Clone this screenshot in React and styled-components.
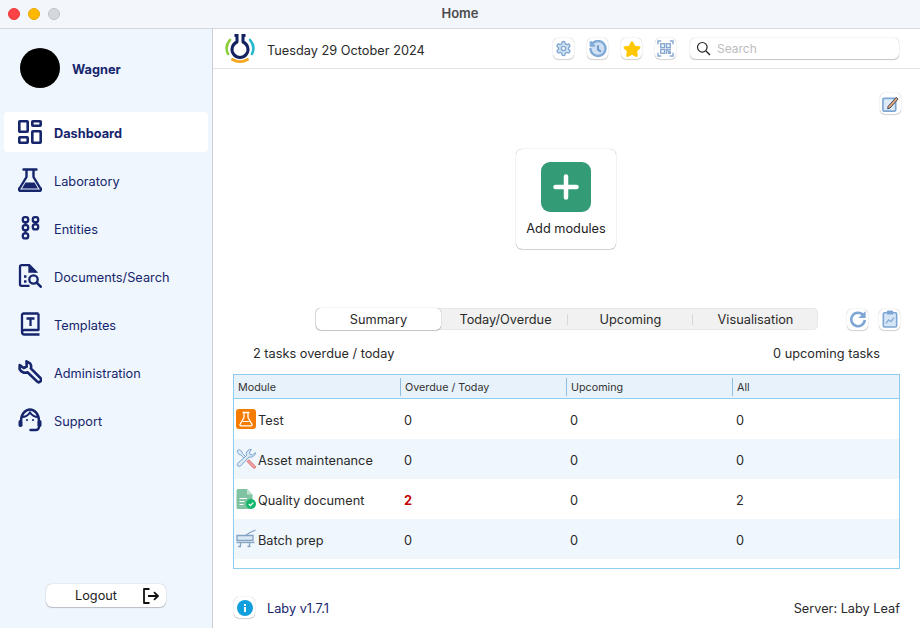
import React from "react";
import styled, { createGlobalStyle } from "styled-components";

const NAVY = "#16256c";

const GlobalStyle = createGlobalStyle`
  html, body {
    margin: 0;
    padding: 0;
    background: #fff;
  }
  body {
    font-family: Inter, "Liberation Sans", sans-serif;
    font-size: 12.75px;
    color: #222;
  }
  * { box-sizing: border-box; }
`;

const Icon = styled.svg`
  display: block;
  flex: none;
`;

const DashboardIcon = () => (
  <Icon width="24" height="24" viewBox="0 0 24 24" fill="none" stroke={NAVY} strokeWidth="2.6">
    <rect x="1.300" y="1.300" width="8.400" height="10.400" rx="0.600" />
    <rect x="14.300" y="1.300" width="8.400" height="4.400" rx="0.600" />
    <rect x="1.300" y="17.300" width="8.400" height="5.400" rx="0.600" />
    <rect x="14.300" y="11.300" width="8.400" height="11.400" rx="0.600" />
  </Icon>
);

const FlaskIcon = () => (
  <Icon width="24" height="24" viewBox="0 0 24 24" fill="none" stroke={NAVY} strokeWidth="2.400">
    <path d="M5.500 1.500h13M8.500 1.500v7.500L1.800 20a1.500 1.500 0 0 0 1.300 2.700h17.800a1.500 1.500 0 0 0 1.300-2.700L15.500 9V1.500" strokeLinejoin="round" strokeLinecap="round" />
    <path d="M7.500 14.500h9l3.500 6H4z" fill={NAVY} stroke="none" />
  </Icon>
);

const EntitiesIcon = () => (
  <Icon width="24" height="24" viewBox="0 0 24 24" fill="none" stroke={NAVY} strokeWidth="2.300">
    <rect x="4.800" y="1.200" width="5.400" height="5" rx="2.200" />
    <rect x="14.800" y="1.200" width="5.400" height="5" rx="2.200" />
    <rect x="4.800" y="9.200" width="5.400" height="5" rx="2.200" />
    <rect x="14.800" y="8.400" width="5.400" height="5" rx="2.200" />
    <rect x="4.800" y="17.400" width="5.400" height="5" rx="2.200" />
    <path d="M7.500 6.200v3M7.500 14.200v3.200M17.500 6.200v2.200" />
  </Icon>
);

const DocSearchIcon = () => (
  <Icon width="24" height="24" viewBox="0 0 24 24" fill="none" stroke={NAVY} strokeWidth="2.300">
    <path d="M11.500 21.800H3.500a1.500 1.500 0 0 1-1.500-1.500V2.700a1.500 1.500 0 0 1 1.500-1.500H11l6 6v1.300" strokeLinejoin="round" />
    <path d="M11.500 1.500v6h6z" fill={NAVY} />
    <path d="M6 12.500h2.500M6 17.500h2.500" />
    <circle cx="15.500" cy="15.500" r="4.200" />
    <path d="M18.700 18.700l4 4" strokeLinecap="round" strokeWidth="2.600" />
  </Icon>
);

const TemplateIcon = () => (
  <Icon width="24" height="24" viewBox="0 0 24 24" fill="none" stroke={NAVY} strokeWidth="2.300">
    <path d="M20.500 1.500H5.500A1.500 1.500 0 0 0 4 3v17A2.500 2.500 0 0 0 6.500 22.500H21.500M20.500 1.500v16.500H6.500A2.500 2.500 0 0 0 4 20" strokeLinejoin="round" />
    <path d="M8.500 6.500h8M12.500 6.500v7.500" />
  </Icon>
);

const WrenchIcon = () => (
  <Icon width="24" height="24" viewBox="0 0 24 24" fill="none" stroke={NAVY} strokeWidth="2.600">
    <path d="M8.500 1.400L12 3.400a5 5 0 0 1 .8 5L22.400 18a2.400 2.400 0 0 1-3.400 3.400L9.500 12.300a6 6 0 0 1-7.900-3.300L1.700 5l4 3 3-1.500z" strokeLinejoin="round" />
  </Icon>
);

const SupportIcon = () => (
  <Icon width="24" height="24" viewBox="0 0 24 24" fill="none" stroke={NAVY} strokeWidth="2.400">
    <path d="M3 13C3 6 7.500 1.500 12 1.500S21 6 21 13v6a3 3 0 0 1-3 3h-5.500" strokeLinecap="round" />
    <path d="M4 9c2.500 0 6-1.500 8-4.500 2 3 5.500 4.500 8 4.500" strokeWidth="2" />
    <rect x="0.500" y="12" width="4" height="7" rx="1.800" fill={NAVY} stroke="none" />
    <rect x="19.500" y="12" width="4" height="7" rx="1.800" fill={NAVY} stroke="none" />
    <circle cx="9" cy="12" r="1.100" fill={NAVY} stroke="none" />
    <circle cx="15" cy="12" r="1.100" fill={NAVY} stroke="none" />
  </Icon>
);

const LogoutIcon = () => (
  <Icon width="16" height="16" viewBox="0 0 16 16" fill="none" stroke="#111" strokeWidth="1.800">
    <path d="M6.500 1H1v14h5.500" strokeLinejoin="round" />
    <path d="M5 8h10M11 4.200L15 8l-4 3.800" />
  </Icon>
);

const LogoIcon = () => (
  <Icon width="30" height="30" viewBox="0 0 30 30" fill="none">
    <path d="M3 20A12.800 12.800 0 0 1 5 6" stroke="#8ccf3a" strokeWidth="2.600" strokeLinecap="round" />
    <path d="M27 20A12.800 12.800 0 0 0 25 6" stroke="#25b9d0" strokeWidth="2.600" strokeLinecap="round" />
    <path d="M7.500 25.500c4.500 2.800 10.500 2.800 15 0" stroke="#f5a623" strokeWidth="3" strokeLinecap="round" />
    <path d="M9.500 1.500h4M16.500 1.500h4M12 1.500v6.500a8 8 0 1 0 6 0V1.500" stroke="#14225f" strokeWidth="3" strokeLinejoin="round" />
  </Icon>
);

const GearIcon = () => (
  <Icon width="17" height="17" viewBox="0 0 24 24" fill="#d3e4f5" stroke="#80a8d2" strokeWidth="2">
    <path d="M12.220 2h-.44a2 2 0 0 0-2 2v.18a2 2 0 0 1-1 1.730l-.43.250a2 2 0 0 1-2 0l-.15-.08a2 2 0 0 0-2.730.730l-.22.380a2 2 0 0 0 .730 2.730l.15.100a2 2 0 0 1 1 1.720v.510a2 2 0 0 1-1 1.740l-.15.090a2 2 0 0 0-.730 2.730l.22.380a2 2 0 0 0 2.730.730l.15-.08a2 2 0 0 1 2 0l.43.250a2 2 0 0 1 1 1.730V20a2 2 0 0 0 2 2h.44a2 2 0 0 0 2-2v-.18a2 2 0 0 1 1-1.730l.43-.250a2 2 0 0 1 2 0l.15.08a2 2 0 0 0 2.730-.730l.22-.390a2 2 0 0 0-.730-2.730l-.15-.08a2 2 0 0 1-1-1.740v-.500a2 2 0 0 1 1-1.740l.15-.090a2 2 0 0 0 .730-2.730l-.22-.380a2 2 0 0 0-2.730-.730l-.15.080a2 2 0 0 1-2 0l-.43-.250a2 2 0 0 1-1-1.730V4a2 2 0 0 0-2-2z" />
    <circle cx="12" cy="12" r="3" fill="#fff" />
  </Icon>
);

const HistoryIcon = () => (
  <Icon width="18" height="18" viewBox="0 0 24 24" fill="#cfe0f2" stroke="#82aad6" strokeWidth="3.200">
    <path d="M3.500 6A10 10 0 1 1 2 12" strokeLinecap="round" />
    <path d="M2.500 1.500v6H8" fill="none" />
    <path d="M12 7v6l4 2.500" fill="none" stroke="#6f9ace" strokeWidth="2.800" />
  </Icon>
);

const StarIcon = () => (
  <Icon width="18" height="18" viewBox="0 0 24 24" fill="#ffc800" stroke="#ffc800" strokeWidth="3.500" strokeLinejoin="round">
    <path d="M12 3.500l3 5.800 6.500.9-4.700 4.600 1.200 6-6-3-6 3 1.200-6L2.500 10.200 9 9.300z" />
  </Icon>
);

const QrIcon = () => (
  <Icon width="17" height="17" viewBox="0 0 18 18" fill="none" stroke="#86a8d0" strokeWidth="1.500">
    <path d="M1 4.500V1h3.500M13.500 1H17v3.500M1 13.500V17h3.500M13.500 17H17v-3.500" />
    <rect x="4" y="4" width="4" height="4" />
    <rect x="10" y="4" width="4" height="4" />
    <rect x="4" y="10" width="4" height="4" />
    <path d="M10 10h1.500v1.500H10zM12.500 12.500H14V14h-1.500zM12.500 10H14v1M10 12.500V14h1" />
  </Icon>
);

const SearchGlyph = () => (
  <Icon width="15" height="15" viewBox="0 0 15 15" fill="none" stroke="#222" strokeWidth="1.200">
    <circle cx="6.300" cy="6.300" r="4.800" />
    <path d="M10 10l4 4" strokeWidth="1.500" />
  </Icon>
);

const EditIcon = () => (
  <Icon width="17" height="17" viewBox="0 0 18 18" fill="none">
    <rect x="1" y="3.500" width="13.500" height="13.500" rx="1" fill="#dce9f7" stroke="#7ea6d4" strokeWidth="1.800" />
    <path d="M6.500 12L15 2.500l2 1.800-8.500 9.500-2.500.8z" fill="#e8a878" stroke="#35405e" strokeWidth="1" strokeLinejoin="round" />
  </Icon>
);

const PlusIcon = () => (
  <Icon width="26" height="26" viewBox="0 0 26 26" fill="none" stroke="#fff" strokeWidth="4.500" strokeLinecap="round">
    <path d="M13 2.500v21M2.500 13h21" />
  </Icon>
);

const RefreshIcon = () => (
  <Icon width="18" height="18" viewBox="0 0 20 20" fill="none">
    <path d="M16 6A7.500 7.500 0 1 0 17.500 11" stroke="#7ea6d4" strokeWidth="2.800" />
    <path d="M18.500 1v8h-8z" fill="#7ea6d4" />
  </Icon>
);

const ReportIcon = () => (
  <Icon width="16" height="18" viewBox="0 0 18 20" fill="none">
    <rect x="1.500" y="3" width="15" height="16" rx="1.500" fill="#d5e5f6" stroke="#7ea6d4" strokeWidth="1.800" />
    <rect x="5.500" y="0.500" width="7" height="4.500" rx="1" fill="#7ea6d4" />
    <path d="M4.500 15l3-4 2.500 2 3.500-4.500" stroke="#7ea6d4" strokeWidth="1.300" />
  </Icon>
);

const InfoIcon = () => (
  <Icon width="16" height="16" viewBox="0 0 16 16">
    <circle cx="8" cy="8" r="8" fill="#12a0dc" />
    <rect x="7" y="7" width="2" height="5" fill="#fff" />
    <rect x="7" y="4" width="2" height="2" fill="#fff" />
  </Icon>
);

const TestModuleIcon = () => (
  <Icon width="20" height="20" viewBox="0 0 20 20">
    <rect width="20" height="20" rx="3" fill="#f57c00" />
    <path d="M6.500 3.500h7M8 3.500v5l-4 7a1 1 0 0 0 1 1.300h10a1 1 0 0 0 1-1.300l-4-7v-5" fill="none" stroke="#fff" strokeWidth="1.300" strokeLinejoin="round" />
    <path d="M6.500 12.500h7" stroke="#fff" strokeWidth="1" />
  </Icon>
);

const AssetModuleIcon = () => (
  <Icon width="20" height="20" viewBox="0 0 20 20" fill="none">
    <path d="M1 2l2-1.500 3 2 .5 2 5 5-1.500 1.500-5-5-2-.5z" fill="#dceaf8" stroke="#7ba4d0" strokeWidth="0.900" strokeLinejoin="round" />
    <path d="M19.500 3.500a5 5 0 0 1-6.500 4.500L4.500 17a2 2 0 0 1-3-2.500L10.500 6.500A4.500 4.500 0 0 1 15.500.5l-2 2.500.5 2.500 2.500.5z" fill="#dceaf8" stroke="#7ba4d0" strokeWidth="1" strokeLinejoin="round" />
    <path d="M11 12.500l1.800-1.800 6.400 6.300a1.300 1.300 0 0 1-1.900 1.900z" fill="#f0a0a0" stroke="#d87070" strokeWidth="0.900" />
  </Icon>
);

const QualityModuleIcon = () => (
  <Icon width="20" height="20" viewBox="0 0 20 20">
    <path d="M0.500 1.500A1.500 1.500 0 0 1 2 0H11l5.500 5.500V18.500a1.500 1.500 0 0 1-1.500 1.500H2a1.500 1.500 0 0 1-1.500-1.500z" fill="#7fc3a3" />
    <path d="M3.500 9.500h7.500M3.500 12.500h5M3.500 15.500h4" stroke="#fff" strokeWidth="1.200" />
    <path d="M11 0v5.500h5.500z" fill="#bfe3d0" />
    <circle cx="15" cy="15" r="5" fill="#12b76a" />
    <path d="M12.800 15l1.600 1.600 2.900-3" stroke="#fff" strokeWidth="1.300" fill="none" />
  </Icon>
);

const BatchModuleIcon = () => (
  <Icon width="20" height="20" viewBox="0 0 20 20" fill="none" stroke="#86a3c4" strokeWidth="1.300">
    <path d="M1 6.500h16v5H1z" fill="#dce9f7" />
    <path d="M10 6c3-2 6-3.500 9.500-5" />
    <path d="M0.500 13.500h18" />
    <path d="M4.500 13.500v4M13.500 13.500v4" />
    <path d="M2 17.500h3M11.500 17.500h3" />
  </Icon>
);

const nav = [
  { label: "Dashboard", icon: <DashboardIcon />, active: true },
  { label: "Laboratory", icon: <FlaskIcon /> },
  { label: "Entities", icon: <EntitiesIcon /> },
  { label: "Documents/Search", icon: <DocSearchIcon /> },
  { label: "Templates", icon: <TemplateIcon /> },
  { label: "Administration", icon: <WrenchIcon /> },
  { label: "Support", icon: <SupportIcon /> },
];

const rows = [
  { name: "Test", icon: <TestModuleIcon />, overdue: 0, upcoming: 0, all: 0 },
  { name: "Asset maintenance", icon: <AssetModuleIcon />, overdue: 0, upcoming: 0, all: 0 },
  { name: "Quality document", icon: <QualityModuleIcon />, overdue: 2, upcoming: 0, all: 2 },
  { name: "Batch prep", icon: <BatchModuleIcon />, overdue: 0, upcoming: 0, all: 0 },
];

const tabs = ["Summary", "Today/Overdue", "Upcoming", "Visualisation"];

const Window = styled.div`
  width: 920px;
  height: 628px;
  display: flex;
  flex-direction: column;
  overflow: hidden;
  background: #fff;
`;

const TitleBar = styled.div`
  height: 29px;
  flex: none;
  display: flex;
  align-items: center;
  position: relative;
  padding: 0 0 1px 8px;
  gap: 8px;
  background: #f3f6fb;
  border-bottom: 1px solid #d4d7dd;
`;

const Light = styled.span`
  width: 12px;
  height: 12px;
  border-radius: 50%;
  background: ${(p) => p.$color};
  border: 1px solid ${(p) => p.$edge};
`;

const Title = styled.div`
  position: absolute;
  left: 0;
  right: 0;
  top: 6px;
  line-height: 15px;
  text-align: center;
  font-size: 13px;
  font-weight: 600;
  color: #4c4c4c;
`;

const Body = styled.div`
  flex: 1;
  display: flex;
  min-height: 0;
`;

const Sidebar = styled.aside`
  width: 213px;
  flex: none;
  display: flex;
  flex-direction: column;
  background: #eff6fe;
  border-right: 1px solid #c9ccd1;
  padding: 19px 4px 21px;
`;

const Profile = styled.div`
  display: flex;
  align-items: center;
  gap: 12px;
  padding-left: 16px;
  height: 40px;
  margin-bottom: 24px;
`;

const Avatar = styled.div`
  width: 40px;
  height: 40px;
  border-radius: 50%;
  background: #000;
`;

const UserName = styled.div`
  padding-top: 2px;
  font-weight: 700;
  color: ${NAVY};
`;

const NavItem = styled.div`
  width: 204px;
  height: 40px;
  display: flex;
  align-items: center;
  gap: 12px;
  padding-left: 14px;
  margin-bottom: 8px;
  border-radius: 4px;
  color: ${NAVY};
  font-weight: ${(p) => (p.$active ? 700 : 400)};
  background: ${(p) => (p.$active ? "#fff" : "transparent")};
`;

const NavLabel = styled.span`
  padding-top: 2px;
`;

const LogoutButton = styled.div`
  margin: auto 0 0 42px;
  width: 120px;
  height: 23px;
  display: flex;
  align-items: center;
  justify-content: space-between;
  padding: 0 7px 0 29px;
  background: #fff;
  border-radius: 6px;
  box-shadow: 0 0 1px rgba(0, 0, 0, 0.35), 0 1px 1px rgba(0, 0, 0, 0.2);
  color: #222;
`;

const Main = styled.main`
  flex: 1;
  min-width: 0;
  display: flex;
  flex-direction: column;
`;

const TopBar = styled.div`
  height: 40px;
  flex: none;
  display: flex;
  align-items: center;
  padding: 0 21px 0 12px;
  border-bottom: 1px solid #e4e4e4;
`;

const DateText = styled.div`
  margin-left: 12px;
  padding-top: 3px;
  color: #2a2a2a;
  flex: 1;
`;

const IconButton = styled.div`
  width: 21px;
  height: 21px;
  flex: none;
  display: flex;
  align-items: center;
  justify-content: center;
  background: #fff;
  border-radius: 5px;
  box-shadow: 0 0 1px rgba(0, 0, 0, 0.35), 0 1px 1px rgba(0, 0, 0, 0.15);
`;

const TopIcons = styled.div`
  display: flex;
  gap: 13px;
  margin-right: 14px;
`;

const SearchBox = styled.div`
  width: 209px;
  height: 21px;
  display: flex;
  align-items: center;
  gap: 6px;
  padding-left: 6px;
  background: #fff;
  border-radius: 5px;
  box-shadow: 0 0 1px rgba(0, 0, 0, 0.35), 0 1px 1px rgba(0, 0, 0, 0.2);
  font-size: 12px;
  color: #bdbdbd;
`;

const EditRow = styled.div`
  display: flex;
  justify-content: flex-end;
  padding: 24px 19px 0 0;
`;

const AddRow = styled.div`
  display: flex;
  justify-content: center;
  margin-top: 35px;
  padding-right: 1px;
`;

const AddCard = styled.div`
  width: 100px;
  height: 100px;
  display: flex;
  flex-direction: column;
  align-items: center;
  padding-top: 13px;
  gap: 9px;
  border-radius: 6px;
  background: #fff;
  box-shadow: 0 0 1px rgba(0, 0, 0, 0.4), 0 1px 1px rgba(0, 0, 0, 0.15);
  color: #222;
`;

const AddTile = styled.div`
  width: 50px;
  height: 50px;
  display: flex;
  align-items: center;
  justify-content: center;
  border-radius: 9px;
  background: #339b75;
`;

const TabsRow = styled.div`
  display: flex;
  align-items: center;
  margin-top: 59px;
  padding-left: 102px;
`;

const TabStrip = styled.div`
  width: 503px;
  height: 22px;
  display: flex;
  background: #f1f1f1;
  border-radius: 5px;
  box-shadow: inset 0 0 0 1px #e8e8e8;
`;

const Tab = styled.div`
  flex: 1;
  display: flex;
  align-items: center;
  justify-content: center;
  position: relative;
  color: #2a2a2a;
  background: ${(p) => (p.$active ? "#fff" : "transparent")};
  margin: ${(p) => (p.$active ? "0 2px 0 1px" : "0")};
  border-radius: 5px;
  box-shadow: ${(p) => (p.$active ? "0 0 1px rgba(0,0,0,.45), 0 1px 1px rgba(0,0,0,.2)" : "none")};
  ${(p) =>
    p.$divider &&
    `&::after {
      content: "";
      position: absolute;
      right: 0;
      top: 6px;
      height: 11px;
      width: 1px;
      background: #d8d8d8;
    }`}
`;

const TabActions = styled.div`
  display: flex;
  gap: 11px;
  margin-left: 29px;
`;

const Counts = styled.div`
  display: flex;
  justify-content: space-between;
  padding: 16px 40px 0 40px;
  height: 44px;
  color: #2a2a2a;
`;

const Table = styled.div`
  margin: 0 20px;
  height: 195px;
  border: 1px solid #8fcdef;
  display: flex;
  flex-direction: column;
`;

const columns = "166px 166px 166px 1fr";

const HeadRow = styled.div`
  display: grid;
  grid-template-columns: ${columns};
  height: 24px;
  flex: none;
  align-items: center;
  background: #e8f2fb;
  border-bottom: 1px solid #8fcdef;
  font-size: 10.75px;
  color: #333;
`;

const HeadCell = styled.div`
  height: 18px;
  display: flex;
  align-items: center;
  padding: 2px 0 0 4px;
  border-left: ${(p) => (p.$first ? "none" : "1px solid #8fc0e4")};
`;

const Row = styled.div`
  display: grid;
  grid-template-columns: ${columns};
  height: 40px;
  align-items: center;
  background: ${(p) => (p.$alt ? "#eff6fc" : "#fff")};
  color: #2a2a2a;
`;

const ModuleCell = styled.div`
  display: flex;
  align-items: center;
  gap: 2px;
  padding-left: 2px;
`;

const ModuleName = styled.span`
  padding-top: 2px;
`;

const Cell = styled.div`
  padding: 2px 0 0 4px;
  color: ${(p) => (p.$alert ? "#c40000" : "inherit")};
  font-weight: ${(p) => (p.$alert ? 700 : 400)};
`;

const Footer = styled.div`
  margin-top: auto;
  display: flex;
  align-items: center;
  height: 21px;
  margin-bottom: 10px;
  padding: 0 20px 0 21px;
`;

const Version = styled.div`
  margin-left: 12px;
  padding-top: 2px;
  color: ${NAVY};
  flex: 1;
`;

const Server = styled.div`
  padding-top: 2px;
  color: #2a2a2a;
`;

export default function App() {
  return (
    <Window>
      <GlobalStyle />
      <TitleBar>
        <Light $color="#ff4245" $edge="#e8383b" />
        <Light $color="#ffb800" $edge="#e9a800" />
        <Light $color="#d5d8df" $edge="#bfc2c9" />
        <Title>Home</Title>
      </TitleBar>
      <Body>
        <Sidebar>
          <Profile>
            <Avatar />
            <UserName>Wagner</UserName>
          </Profile>
          {nav.map((item) => (
            <NavItem key={item.label} $active={item.active}>
              {item.icon}
              <NavLabel>{item.label}</NavLabel>
            </NavItem>
          ))}
          <LogoutButton>
            Logout
            <LogoutIcon />
          </LogoutButton>
        </Sidebar>
        <Main>
          <TopBar>
            <LogoIcon />
            <DateText>Tuesday 29 October 2024</DateText>
            <TopIcons>
              <IconButton><GearIcon /></IconButton>
              <IconButton><HistoryIcon /></IconButton>
              <IconButton><StarIcon /></IconButton>
              <IconButton><QrIcon /></IconButton>
            </TopIcons>
            <SearchBox>
              <SearchGlyph />
              Search
            </SearchBox>
          </TopBar>
          <EditRow>
            <IconButton><EditIcon /></IconButton>
          </EditRow>
          <AddRow>
            <AddCard>
              <AddTile><PlusIcon /></AddTile>
              Add modules
            </AddCard>
          </AddRow>
          <TabsRow>
            <TabStrip>
              {tabs.map((t, i) => (
                <Tab key={t} $active={i === 0} $divider={i === 1 || i === 2}>
                  {t}
                </Tab>
              ))}
            </TabStrip>
            <TabActions>
              <IconButton><RefreshIcon /></IconButton>
              <IconButton><ReportIcon /></IconButton>
            </TabActions>
          </TabsRow>
          <Counts>
            <span>2 tasks overdue / today</span>
            <span>0 upcoming tasks</span>
          </Counts>
          <Table>
            <HeadRow>
              <HeadCell $first>Module</HeadCell>
              <HeadCell>Overdue / Today</HeadCell>
              <HeadCell>Upcoming</HeadCell>
              <HeadCell>All</HeadCell>
            </HeadRow>
            {rows.map((r, i) => (
              <Row key={r.name} $alt={i % 2 === 1}>
                <ModuleCell>
                  {r.icon}
                  <ModuleName>{r.name}</ModuleName>
                </ModuleCell>
                <Cell $alert={r.overdue > 0}>{r.overdue}</Cell>
                <Cell>{r.upcoming}</Cell>
                <Cell>{r.all}</Cell>
              </Row>
            ))}
          </Table>
          <Footer>
            <IconButton><InfoIcon /></IconButton>
            <Version>Laby v1.7.1</Version>
            <Server>Server: Laby Leaf</Server>
          </Footer>
        </Main>
      </Body>
    </Window>
  );
}
